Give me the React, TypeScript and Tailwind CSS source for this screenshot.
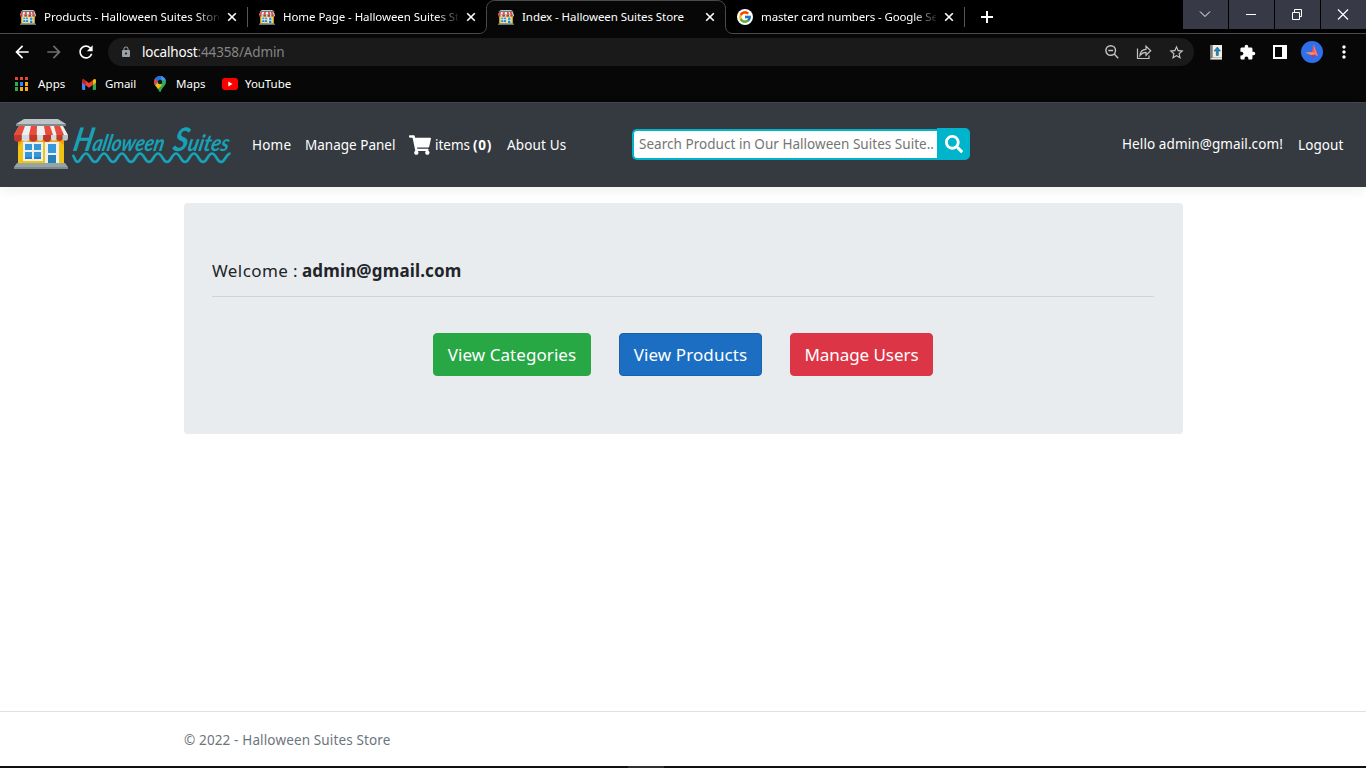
import React from "react";
import {
  MdArrowBack,
  MdArrowForward,
  MdRefresh,
  MdLock,
  MdExtension,
  MdStarBorder,
  MdMoreVert,
} from "react-icons/md";
import { FaShoppingCart, FaSearch } from "react-icons/fa";
import { FcGoogle } from "react-icons/fc";

function StoreIcon({ className }: { className: string }) {
  return (
    <svg viewBox="0 0 54 50" preserveAspectRatio="none" className={className}>
      <rect x="4" y="20" width="46" height="25" fill="#f1c40f" />
      <path d="M4 20h46v6l-4-3H8l-4 4z" fill="#f39c12" />
      <path d="M10 0h34l8 5H2z" fill="#bdc3c7" />
      <path d="M2 5h50v2H2z" fill="#7f8c8d" />
      <path d="M5 7h44l5 9H0z" fill="#ecf0f1" />
      <path d="M5 7h6L7.700 16H0zM17 7h6l-.3 9H15zM30 7h6l3 9h-7.500zM42 7h5l-.5 0 0 0z" fill="#e74c3c" />
      <path d="M40 7h6l4 9h-7.500z" fill="#e74c3c" />
      <path d="M0 16h7.700v3a3.850 3.850 0 01-7.700 0zM15.400 16h7.700v3a3.850 3.850 0 01-7.700 0zM29 16h8v3a4 4 0 01-8 0zM42.500 16h6v3a3 3 0 01-6 0z" fill="#c0392b" />
      <path d="M7.700 16h7.700v3a3.850 3.850 0 01-7.700 0zM23.100 16h6v3a3 3 0 01-6 0zM37 16h5.500v3a2.750 2.750 0 01-5.500 0z" fill="#d5dadd" />
      <path d="M48.500 16H54v3a2.750 2.750 0 01-5.500 0z" fill="#bdc3c7" />
      <rect x="9" y="23" width="20" height="19" fill="#ecf0f1" />
      <path d="M11 25h7v6h-7zM20 25h7v6h-7zM11 33h7v7h-7zM20 33h7v7h-7z" fill="#3498db" />
      <path d="M11 38h7v2h-7zM20 38h7v2h-7z" fill="#2980b9" />
      <rect x="31" y="23" width="14" height="22" fill="#ecf0f1" />
      <path d="M34 25h8v9h-8z" fill="#3498db" />
      <path d="M34 36h8v9h-8z" fill="#2980b9" />
      <path d="M3 44h48l3 4H0z" fill="#95a5a6" />
      <path d="M0 48h54v2H0z" fill="#7f8c8d" />
    </svg>
  );
}

function CloseGlyph() {
  return (
    <svg viewBox="0 0 10 10" className="size-2.5 shrink-0">
      <path d="M1.200 1.200l7.600 7.600M8.800 1.200L1.200 8.800" stroke="#fff" strokeWidth="1.600" />
    </svg>
  );
}

function Tab({
  title,
  tracking,
  active,
  google,
  fade,
  separator,
}: {
  title: string;
  tracking: string;
  active?: boolean;
  google?: boolean;
  fade?: boolean;
  separator?: boolean;
}) {
  return (
    <div className="relative flex h-[34px] w-[239px] shrink-0 items-center pl-3">
      {active && (
        <svg className="absolute top-0 -left-[7px] h-[34px] w-[254px]" viewBox="0 0 254 34">
          <path
            d="M0 34V33.500C4.500 33.500 7.500 30.500 7.500 26V8.500C7.500 4 11 .5 15.500 .5H238.500C243 .5 246.500 4 246.500 8.500V26C246.500 30.500 249.500 33.500 254 33.500V34Z"
            fill="#070707"
          />
          <path
            d="M0 33.500C4.500 33.500 7.500 30.500 7.500 26V8.500C7.500 4 11 .5 15.500 .5H238.500C243 .5 246.500 4 246.500 8.500V26C246.500 30.500 249.500 33.500 254 33.500"
            fill="none"
            stroke="#4a4a4c"
          />
        </svg>
      )}
      <div className="relative flex w-full items-center">
        {google ? (
          <span className="flex size-4 shrink-0 items-center justify-center rounded-full bg-white">
            <FcGoogle className="size-3.5" />
          </span>
        ) : (
          <StoreIcon className="h-[15px] w-4 shrink-0" />
        )}
        <span
          className={`ml-2 w-[175px] overflow-hidden text-[11.5px] leading-5 whitespace-nowrap ${tracking} ${
            fade ? "[mask-image:linear-gradient(to_right,#000_152px,transparent_178px)]" : ""
          }`}
        >
          {title}
        </span>
        <span className="ml-2 flex">
          <CloseGlyph />
        </span>
      </div>
      {separator && <span className="absolute top-[7px] -right-px h-5 w-px bg-[#55565a]" />}
    </div>
  );
}

function WindowButton({ children }: { children: React.ReactNode }) {
  return (
    <div className="flex h-[29px] w-[45px] items-center justify-center bg-[#373947] pr-[2px] pb-px">
      <svg viewBox="0 0 12 12" className="size-3" fill="none" stroke="#fff">
        {children}
      </svg>
    </div>
  );
}

function TabStrip() {
  return (
    <div className="flex h-[34px] border-b border-[#4a4a4c] bg-black pl-2">
      <Tab title="Products - Halloween Suites Store" tracking="tracking-[-0.036px]" fade separator />
      <Tab title="Home Page - Halloween Suites Store" tracking="tracking-[-0.061px]" fade />
      <Tab title="Index - Halloween Suites Store" tracking="tracking-[-0.06px]" active />
      <Tab title="master card numbers - Google Search" tracking="tracking-[-0.123px]" google fade separator />
      <svg viewBox="0 0 12 12" className="mt-[11px] ml-[17px] size-3">
        <path d="M6 0v12M0 6h12" stroke="#fff" strokeWidth="2" />
      </svg>
      <div className="ml-auto flex gap-px">
        <WindowButton>
          <path d="M1 3.500l5 5 5-5" strokeWidth="1" />
        </WindowButton>
        <WindowButton>
          <path d="M1 6.500h10" />
        </WindowButton>
        <WindowButton>
          <path d="M1.500 4.500h7v7h-7zM3.500 4.500v-3h7v7h-2" />
        </WindowButton>
        <WindowButton>
          <path d="M1 1.500l10 10M11 1.500L1 11.500" strokeWidth="1.200" />
        </WindowButton>
      </div>
    </div>
  );
}

function Toolbar() {
  return (
    <div className="flex h-9 items-center pl-3">
      <MdArrowBack className="size-5" />
      <MdArrowForward className="ml-3 size-5 text-[#6f6f6f]" />
      <MdRefresh className="ml-3 size-5" />
      <div className="ml-3 flex h-7 w-[1086px] items-center rounded-full bg-[#1a1a1a] pr-[9px] pl-3">
        <MdLock className="size-3 text-[#9aa0a6]" />
        <span className="ml-2.5 text-[13.5px] leading-5 tracking-[-0.172px]">localhost</span>
        <span className="text-[13.5px] leading-5 tracking-[-0.137px] text-[#858585]">:44358/Admin</span>
        <div className="ml-auto flex items-center gap-4 text-[#c4c4c4]">
          <svg viewBox="0 0 16 16" className="size-4" fill="none" stroke="currentColor" strokeWidth="1.400">
            <circle cx="6.700" cy="6.500" r="4.800" />
            <path d="M10.200 10l4 4.200M4.300 6.500h4.800" />
          </svg>
          <svg viewBox="0 0 16 16" className="size-4" fill="none" stroke="currentColor" strokeWidth="1.200">
            <path d="M1.500 4.500v10h11.500v-3" />
            <path d="M4 11.500c.3-4 2.300-6 6-6.200V2.200l4.700 4.600L10 11.300V8.300c-2.700 0-4.500 1-6 3.200z" />
          </svg>
          <MdStarBorder className="size-[17px]" />
        </div>
      </div>
      <svg viewBox="0 0 12 15" className="ml-4 h-[15px] w-3">
        <path d="M0 0h12v15H0z" fill="#8a8a86" />
        <path d="M2.500 0H12v12.500H2.500z" fill="#f1efdf" />
        <path d="M0 0h2.500v15H0z" fill="#77777c" />
        <path d="M1 13h11v1H1z" fill="#e8e5d4" />
        <path d="M7.300 2l3.200 4H8.300v4.500H6.300V6H4z" fill="#1788c7" stroke="#17496b" strokeWidth=".5" />
      </svg>
      <MdExtension className="ml-[17px] size-[17px]" />
      <svg viewBox="0 0 14 14" className="ml-[17px] size-3.5">
        <path d="M0 0h14v14H0zM2 2v10h7V2z" fill="#fff" fillRule="evenodd" />
      </svg>
      <svg viewBox="0 0 22 22" className="ml-3.5 size-[22px]">
        <circle cx="11" cy="11" r="11" fill="#2f6fea" />
        <path d="M12.500 3l4.500 12-4.500-1.500z" fill="#ff7b6b" />
        <path d="M12.500 3l-1.500 8 2.500 3z" fill="#e8564f" />
        <path d="M4 11.500l8-.5 2.500 3-3 .8z" fill="#ff8574" />
        <path d="M9.500 14l5.500-.5-3 3.500z" fill="#b4405a" />
      </svg>
      <MdMoreVert className="ml-[11px] size-5" />
    </div>
  );
}

function BookmarkBar() {
  return (
    <div className="flex h-8 items-center pb-1 pl-[15px] text-[11.5px]">
      <svg viewBox="0 0 13 14" className="h-3.5 w-[13px]">
        <path d="M0 0h3v3H0zM5 0h3v3H5zM10 0h3v3h-3z" fill="#ea4335" />
        <path d="M0 5h3v4H0zM0 10h3v4H0z" fill="#34a853" />
        <path d="M5 5h3v4H5z" fill="#2a87f5" />
        <path d="M10 5h3v4h-3zM5 10h3v4H5zM10 10h3v4h-3z" fill="#fbac12" />
      </svg>
      <span className="ml-2.5 w-11 tracking-[0.121px]">Apps</span>
      <svg viewBox="0 0 14 11" className="h-[11px] w-3.5">
        <path d="M0 1.500L3.200 4v7H1a1 1 0 01-1-1z" fill="#4285f4" />
        <path d="M14 1.500L10.800 4v7H13a1 1 0 001-1z" fill="#34a853" />
        <path d="M10.800 1L12 .2c.9-.5 2 .1 2 1.300v2l-3.200 2.400z" fill="#fbbc04" />
        <path d="M3.200 1.200L7 4l3.800-2.800v4.700L7 8.700 3.200 5.900z" fill="#ea4335" />
        <path d="M3.200 1.200L2 .2C1.100-.3 0 .3 0 1.500v2l3.200 2.400z" fill="#c5221f" />
      </svg>
      <span className="ml-[9px] w-12 tracking-[-0.103px]">Gmail</span>
      <svg viewBox="0 0 12 16" className="ml-px h-4 w-3">
        <clipPath id="pin">
          <path d="M6 0a6 6 0 016 6c0 3.500-3.500 4.800-5.200 9.300-.3 1-1.300 1-1.600 0C3.500 10.800 0 9.500 0 6a6 6 0 016-6z" />
        </clipPath>
        <g clipPath="url(#pin)">
          <path d="M0 0h12v16H0z" fill="#34a853" />
          <path d="M0 11.500L12-2v-1H0z" fill="#1a73e8" />
          <path d="M7 0h5v5L7.500 4z" fill="#4d90f0" />
          <path d="M0 2l4 3-4 5z" fill="#ea4335" />
          <path d="M0 10.500L4 6l4 3-6 6z" fill="#fbbc04" />
        </g>
        <circle cx="6" cy="6" r="2.200" fill="#0b1b2c" />
      </svg>
      <span className="ml-2.5 w-[46px] tracking-[0.05px]">Maps</span>
      <svg viewBox="0 0 16 12" className="h-3 w-4">
        <rect width="16" height="12" rx="3" fill="#f00" />
        <path d="M6.300 3.500v5l4.200-2.500z" fill="#fff" />
      </svg>
      <span className="ml-[7px] tracking-[-0.05px]">YouTube</span>
    </div>
  );
}

function Logo() {
  return (
    <div className="flex w-[218px] items-start pb-0.5">
      <StoreIcon className="h-[50px] w-[54px]" />
      <svg viewBox="0 0 162 50" className="ml-0.5 h-[50px] w-[162px]">
        <g
          className="fill-[#17a2b8] font-['Lato'] text-[19px] font-bold italic"
          transform="translate(2 32) skewX(-12) scale(1 1.200)"
        >
          <text x="0" y="0" textLength="91" lengthAdjust="spacingAndGlyphs">
            <tspan className="text-[27px]">H</tspan>alloween
          </text>
          <text x="100" y="0" textLength="56" lengthAdjust="spacingAndGlyphs">
            <tspan className="text-[27px]">S</tspan>uites
          </text>
        </g>
        <path
          d="M2.500 36C5 38 5 42.500 7 43c4 0 5-8.500 9-8.500s5 8.500 9 8.500 5-8.500 9-8.500 5 8.500 9 8.500 5-8.500 9-8.500 5 8.500 9 8.500 5-8.500 9-8.500 5 8.500 9 8.500 5-8.500 9-8.500 5 8.500 9 8.500 5-8.500 9-8.500 5 8.500 9 8.500 5-8.500 9-8.500 5 8.500 9 8.500 5-8.500 9-8.500 5 8.500 9 8.500 5-8.500 9.500-8.500"
          fill="none"
          stroke="#17a2b8"
          strokeWidth="2.700"
        />
      </svg>
    </div>
  );
}

function Navbar() {
  return (
    <header className="flex h-[85px] items-center border-t border-[#40464b] bg-[#353a40] pl-3.5 text-[13.5px] leading-5 whitespace-nowrap text-white shadow-[0_4px_11px_rgba(0,0,0,0.06)]">
      <Logo />
      <nav className="ml-5 flex items-center">
        <span className="w-[53px] tracking-[0.2px]">Home</span>
        <span className="w-[104px] tracking-[0.01px]">Manage Panel</span>
        <FaShoppingCart className="size-[22px]" />
        <span className="ml-1 w-[38px]">items</span>
        <span className="w-[34px] font-bold tracking-[0.7px]">(0)</span>
        <span className="w-[60px] tracking-[0.15px]">About Us</span>
      </nav>
      <form className="mb-[3px] ml-[65px] flex h-8 items-end">
        <div className="flex h-[31px] w-[305px] items-center overflow-hidden rounded-l-[5px] border-2 border-r-0 border-[#00b4cc] bg-white pb-px pl-[5px] tracking-[0.033px] text-[#757575]">
          Search Product in Our Halloween Suites Suite..
        </div>
        <div className="flex h-8 w-[33px] items-center justify-center rounded-r-[5px] bg-[#00b4cc]">
          <FaSearch className="size-[18px]" />
        </div>
      </form>
      <div className="ml-auto flex items-center pr-[22px]">
        <span className="w-44 pb-0.5 tracking-[0.1px]">Hello admin@gmail.com!</span>
        <span className="w-[46px] tracking-[0.094px]">Logout</span>
      </div>
    </header>
  );
}

export default function App() {
  return (
    <div className="flex h-[768px] w-[1366px] flex-col overflow-hidden bg-white font-['Noto_Sans','Liberation_Sans',sans-serif]">
      <div className="h-[102px] shrink-0 bg-[#070707] text-white">
        <TabStrip />
        <Toolbar />
        <BookmarkBar />
      </div>
      <Navbar />
      <main className="mx-auto mt-4 h-[231px] w-[999px] rounded-[4px] bg-[#e9ecef] px-[28.5px] pt-[54px] whitespace-nowrap text-[#212529]">
        <h1 className="flex h-[27px] text-[17px] leading-[27px]">
          <span className="w-[90px] tracking-[0.405px]">Welcome :</span>
          <strong className="font-bold tracking-[0.146px]">admin@gmail.com</strong>
        </h1>
        <hr className="mt-3 border-[#cfd3d6]" />
        <div className="mt-9 flex justify-center gap-7 text-[17px] leading-[41px] text-white">
          <button className="h-[43px] w-[158px] rounded-[4px] border border-[#28a745] bg-[#28a745] tracking-[0.067px]">
            View Categories
          </button>
          <button className="h-[43px] w-[143px] rounded-[4px] border border-[#1861ac] bg-[#1b6ec2] tracking-[0.094px]">
            View Products
          </button>
          <button className="h-[43px] w-[143px] rounded-[4px] border border-[#dc3545] bg-[#dc3545] tracking-[-0.066px]">
            Manage Users
          </button>
        </div>
      </main>
      <footer className="mt-auto h-[55px] border-t border-[#dee2e6] pl-[184px] text-[13.5px] leading-[56px] tracking-[0.139px] text-[#6c757d]">
        © 2022 - Halloween Suites Store
      </footer>
      <div className="flex h-0.5 bg-[#101010]">
        <div className="ml-[628px] w-9 bg-[#303030]" />
      </div>
    </div>
  );
}
